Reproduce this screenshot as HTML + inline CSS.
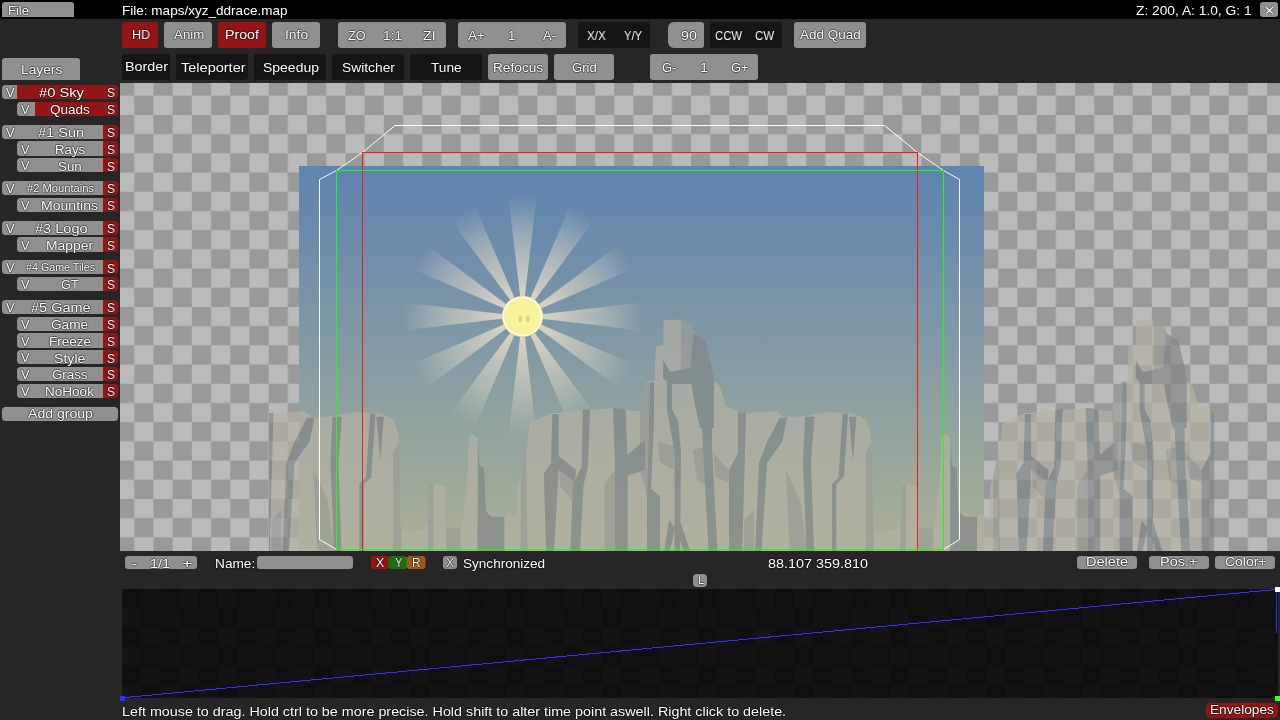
<!DOCTYPE html>
<html><head><meta charset="utf-8"><style>
html,body{margin:0;padding:0;}
body{width:1280px;height:720px;position:relative;overflow:hidden;background:#262626;font-family:"Liberation Sans", sans-serif;}
body>div,body>svg,body>span{position:absolute;}
.t{white-space:pre;transform-origin:0 0;will-change:transform;text-shadow:0.7px 0 0.8px rgba(0,0,0,.45),-0.7px 0 0.8px rgba(0,0,0,.45),0 0.7px 0.8px rgba(0,0,0,.45),0 -0.7px 0.8px rgba(0,0,0,.45);}
svg{display:block;}
</style></head><body>
<div style="left:0px;top:0px;width:1280px;height:18.6px;background:#000;border-radius:0;"></div>
<div style="left:2px;top:2px;width:72px;height:14.8px;background:#909090;border-radius:3px 3px 0 0;"></div>
<span class="t" style="left:8.18px;top:4.81px;font-size:12.22px;line-height:12.22px;color:#fff;transform:scaleX(1.0643);">File</span>
<span class="t" style="left:122.34px;top:5.21px;font-size:12.22px;line-height:12.22px;color:#fff;transform:scaleX(1.1079);">File: maps/xyz_ddrace.map</span>
<span class="t" style="left:1136.17px;top:5.21px;font-size:12.22px;line-height:12.22px;color:#fff;transform:scaleX(1.1265);">Z: 200, A: 1.0, G: 1</span>
<div style="left:1260px;top:2px;width:18px;height:15px;background:#909090;border-radius:3px;"></div>
<svg style="left:1260px;top:2px" width="18" height="15"><path d="M6.2 5.3 L12.8 11.6 M12.8 5.3 L6.2 11.6" stroke="rgba(0,0,0,.35)" stroke-width="2.8"/><path d="M6.2 5.3 L12.8 11.6 M12.8 5.3 L6.2 11.6" stroke="#fff" stroke-width="1.2"/></svg>
<div style="left:122px;top:22px;width:36px;height:25.8px;background:#931515;border-radius:3px;"></div>
<span class="t" style="left:131.53px;top:29.34px;font-size:12.73px;line-height:12.73px;color:#fff;transform:scaleX(0.9796);">HD</span>
<div style="left:164px;top:22px;width:48px;height:25.8px;background:#909090;border-radius:3px;"></div>
<span class="t" style="left:173.70px;top:29.34px;font-size:12.73px;line-height:12.73px;color:#fff;transform:scaleX(1.0481);">Anim</span>
<div style="left:218px;top:22px;width:48px;height:25.8px;background:#931515;border-radius:3px;"></div>
<span class="t" style="left:225.29px;top:29.24px;font-size:12.73px;line-height:12.73px;color:#fff;transform:scaleX(1.1131);">Proof</span>
<div style="left:272px;top:22px;width:48px;height:25.8px;background:#909090;border-radius:3px;"></div>
<span class="t" style="left:284.62px;top:29.14px;font-size:12.73px;line-height:12.73px;color:#fff;transform:scaleX(1.0904);">Info</span>
<div style="left:338px;top:22px;width:108px;height:25.8px;background:#909090;border-radius:3px;"></div>
<span class="t" style="left:348.11px;top:30.34px;font-size:12.73px;line-height:12.73px;color:#fff;transform:scaleX(0.9927);">ZO</span>
<span class="t" style="left:382.84px;top:30.34px;font-size:12.73px;line-height:12.73px;color:#fff;transform:scaleX(1.0805);">1:1</span>
<span class="t" style="left:423.06px;top:30.34px;font-size:12.73px;line-height:12.73px;color:#fff;transform:scaleX(1.1165);">ZI</span>
<div style="left:458px;top:22px;width:108px;height:25.8px;background:#909090;border-radius:3px;"></div>
<span class="t" style="left:468.00px;top:30.34px;font-size:12.73px;line-height:12.73px;color:#fff;transform:scaleX(1.0680);">A+</span>
<span class="t" style="left:508.47px;top:30.34px;font-size:12.73px;line-height:12.73px;color:#fff;transform:scaleX(1.0404);">1</span>
<span class="t" style="left:543.00px;top:30.34px;font-size:12.73px;line-height:12.73px;color:#fff;transform:scaleX(1.0190);">A-</span>
<div style="left:578px;top:22px;width:72px;height:25.8px;background:#151515;border-radius:3px;"></div>
<span class="t" style="left:587.42px;top:30.34px;font-size:12.73px;line-height:12.73px;color:#fff;transform:scaleX(0.9168);">X/X</span>
<span class="t" style="left:623.72px;top:30.34px;font-size:12.73px;line-height:12.73px;color:#fff;transform:scaleX(0.8822);">Y/Y</span>
<div style="left:668px;top:22px;width:36px;height:25.8px;background:#909090;border-radius:6px 3px 3px 6px;"></div>
<span class="t" style="left:680.73px;top:29.54px;font-size:12.73px;line-height:12.73px;color:#fff;transform:scaleX(1.1251);">90</span>
<div style="left:710px;top:22px;width:72px;height:25.8px;background:#151515;border-radius:3px;"></div>
<span class="t" style="left:714.97px;top:30.04px;font-size:12.73px;line-height:12.73px;color:#fff;transform:scaleX(0.8925);">CCW</span>
<span class="t" style="left:755.06px;top:30.04px;font-size:12.73px;line-height:12.73px;color:#fff;transform:scaleX(0.9023);">CW</span>
<div style="left:794px;top:22px;width:72px;height:25.8px;background:#909090;border-radius:3px;"></div>
<span class="t" style="left:800.40px;top:29.14px;font-size:12.73px;line-height:12.73px;color:#fff;transform:scaleX(1.0583);">Add Quad</span>
<div style="left:122px;top:54px;width:48px;height:25.8px;background:#151515;border-radius:3px;"></div>
<span class="t" style="left:125.18px;top:61.34px;font-size:12.73px;line-height:12.73px;color:#fff;transform:scaleX(1.1254);">Border</span>
<div style="left:176px;top:54px;width:72px;height:25.8px;background:#151515;border-radius:3px;"></div>
<span class="t" style="left:180.77px;top:62.14px;font-size:12.73px;line-height:12.73px;color:#fff;transform:scaleX(1.1414);">Teleporter</span>
<div style="left:254px;top:54px;width:72px;height:25.8px;background:#151515;border-radius:3px;"></div>
<span class="t" style="left:263.06px;top:61.94px;font-size:12.73px;line-height:12.73px;color:#fff;transform:scaleX(1.0990);">Speedup</span>
<div style="left:332px;top:54px;width:72px;height:25.8px;background:#151515;border-radius:3px;"></div>
<span class="t" style="left:342.07px;top:61.94px;font-size:12.73px;line-height:12.73px;color:#fff;transform:scaleX(1.0860);">Switcher</span>
<div style="left:410px;top:54px;width:72px;height:25.8px;background:#151515;border-radius:3px;"></div>
<span class="t" style="left:431.39px;top:61.94px;font-size:12.73px;line-height:12.73px;color:#fff;transform:scaleX(1.0783);">Tune</span>
<div style="left:488px;top:54px;width:60px;height:25.8px;background:#909090;border-radius:3px;"></div>
<span class="t" style="left:493.43px;top:61.64px;font-size:12.73px;line-height:12.73px;color:#fff;transform:scaleX(1.0751);">Refocus</span>
<div style="left:554px;top:54px;width:60px;height:25.8px;background:#909090;border-radius:3px;"></div>
<span class="t" style="left:572.49px;top:61.64px;font-size:12.73px;line-height:12.73px;color:#fff;transform:scaleX(1.0294);">Grid</span>
<div style="left:650px;top:54px;width:108px;height:25.8px;background:#909090;border-radius:3px;"></div>
<span class="t" style="left:661.79px;top:61.84px;font-size:12.73px;line-height:12.73px;color:#fff;transform:scaleX(1.0167);">G-</span>
<span class="t" style="left:700.07px;top:61.84px;font-size:12.73px;line-height:12.73px;color:#fff;transform:scaleX(1.1236);">1</span>
<span class="t" style="left:731.09px;top:61.84px;font-size:12.73px;line-height:12.73px;color:#fff;transform:scaleX(1.0207);">G+</span>
<div style="left:2px;top:58px;width:78px;height:22px;background:#909090;border-radius:3px 3px 0 0;"></div>
<span class="t" style="left:20.50px;top:63.64px;font-size:12.73px;line-height:12.73px;color:#fff;transform:scaleX(1.0828);">Layers</span>
<div style="left:17px;top:84.9px;width:101px;height:14.4px;background:#931515;border-radius:0 3.5px 3.5px 0;"></div>
<div style="left:2px;top:84.9px;width:15px;height:14.4px;background:#909090;border-radius:3.5px 0 0 3.5px;"></div>
<span class="t" style="left:5.69px;top:87.24px;font-size:12.73px;line-height:12.73px;color:#fff;transform:scaleX(1.0073);">V</span>
<span class="t" style="left:106.90px;top:87.34px;font-size:12.73px;line-height:12.73px;color:#fff;transform:scaleX(0.9347);">S</span>
<span class="t" style="left:38.51px;top:87.34px;font-size:12.73px;line-height:12.73px;color:#fff;transform:scaleX(1.1558);">#0 Sky</span>
<div style="left:35px;top:101.7px;width:83px;height:14.4px;background:#931515;border-radius:0 3.5px 3.5px 0;"></div>
<div style="left:17px;top:101.7px;width:18px;height:14.4px;background:#909090;border-radius:3.5px 0 0 3.5px;"></div>
<span class="t" style="left:21.49px;top:104.04px;font-size:12.73px;line-height:12.73px;color:#fff;transform:scaleX(1.0073);">V</span>
<span class="t" style="left:106.90px;top:104.14px;font-size:12.73px;line-height:12.73px;color:#fff;transform:scaleX(0.9347);">S</span>
<span class="t" style="left:49.96px;top:104.14px;font-size:12.73px;line-height:12.73px;color:#fff;transform:scaleX(1.0632);">Quads</span>
<div style="left:17px;top:124.5px;width:86px;height:14.4px;background:#909090;border-radius:0;"></div>
<div style="left:103px;top:124.5px;width:15px;height:14.4px;background:#931515;border-radius:0 3.5px 3.5px 0;"></div>
<div style="left:2px;top:124.5px;width:15px;height:14.4px;background:#909090;border-radius:3.5px 0 0 3.5px;"></div>
<span class="t" style="left:5.69px;top:126.84px;font-size:12.73px;line-height:12.73px;color:#fff;transform:scaleX(1.0073);">V</span>
<span class="t" style="left:106.90px;top:126.94px;font-size:12.73px;line-height:12.73px;color:#fff;transform:scaleX(0.9347);">S</span>
<span class="t" style="left:38.32px;top:126.94px;font-size:12.73px;line-height:12.73px;color:#fff;transform:scaleX(1.1448);">#1 Sun</span>
<div style="left:35px;top:141.3px;width:68px;height:14.4px;background:#909090;border-radius:0;"></div>
<div style="left:103px;top:141.3px;width:15px;height:14.4px;background:#931515;border-radius:0 3.5px 3.5px 0;"></div>
<div style="left:17px;top:141.3px;width:18px;height:14.4px;background:#909090;border-radius:3.5px 0 0 3.5px;"></div>
<span class="t" style="left:21.49px;top:143.64px;font-size:12.73px;line-height:12.73px;color:#fff;transform:scaleX(1.0073);">V</span>
<span class="t" style="left:106.90px;top:143.74px;font-size:12.73px;line-height:12.73px;color:#fff;transform:scaleX(0.9347);">S</span>
<span class="t" style="left:54.56px;top:143.74px;font-size:12.73px;line-height:12.73px;color:#fff;transform:scaleX(1.0434);">Rays</span>
<div style="left:35px;top:158.1px;width:68px;height:14.4px;background:#909090;border-radius:0;"></div>
<div style="left:103px;top:158.1px;width:15px;height:14.4px;background:#931515;border-radius:0 3.5px 3.5px 0;"></div>
<div style="left:17px;top:158.1px;width:18px;height:14.4px;background:#909090;border-radius:3.5px 0 0 3.5px;"></div>
<span class="t" style="left:21.49px;top:160.44px;font-size:12.73px;line-height:12.73px;color:#fff;transform:scaleX(1.0073);">V</span>
<span class="t" style="left:106.90px;top:160.54px;font-size:12.73px;line-height:12.73px;color:#fff;transform:scaleX(0.9347);">S</span>
<span class="t" style="left:58.28px;top:160.54px;font-size:12.73px;line-height:12.73px;color:#fff;transform:scaleX(1.0501);">Sun</span>
<div style="left:17px;top:180.9px;width:86px;height:14.4px;background:#909090;border-radius:0;"></div>
<div style="left:103px;top:180.9px;width:15px;height:14.4px;background:#931515;border-radius:0 3.5px 3.5px 0;"></div>
<div style="left:2px;top:180.9px;width:15px;height:14.4px;background:#909090;border-radius:3.5px 0 0 3.5px;"></div>
<span class="t" style="left:5.69px;top:183.24px;font-size:12.73px;line-height:12.73px;color:#fff;transform:scaleX(1.0073);">V</span>
<span class="t" style="left:106.90px;top:183.34px;font-size:12.73px;line-height:12.73px;color:#fff;transform:scaleX(0.9347);">S</span>
<span class="t" style="left:27.40px;top:183.83px;font-size:10.49px;line-height:10.49px;color:#fff;transform:scaleX(1.0633);">#2 Mountains</span>
<div style="left:35px;top:197.7px;width:68px;height:14.4px;background:#909090;border-radius:0;"></div>
<div style="left:103px;top:197.7px;width:15px;height:14.4px;background:#931515;border-radius:0 3.5px 3.5px 0;"></div>
<div style="left:17px;top:197.7px;width:18px;height:14.4px;background:#909090;border-radius:3.5px 0 0 3.5px;"></div>
<span class="t" style="left:21.49px;top:200.04px;font-size:12.73px;line-height:12.73px;color:#fff;transform:scaleX(1.0073);">V</span>
<span class="t" style="left:106.90px;top:200.14px;font-size:12.73px;line-height:12.73px;color:#fff;transform:scaleX(0.9347);">S</span>
<span class="t" style="left:41.13px;top:200.14px;font-size:12.73px;line-height:12.73px;color:#fff;transform:scaleX(1.1054);">Mountins</span>
<div style="left:17px;top:220.5px;width:86px;height:14.4px;background:#909090;border-radius:0;"></div>
<div style="left:103px;top:220.5px;width:15px;height:14.4px;background:#931515;border-radius:0 3.5px 3.5px 0;"></div>
<div style="left:2px;top:220.5px;width:15px;height:14.4px;background:#909090;border-radius:3.5px 0 0 3.5px;"></div>
<span class="t" style="left:5.69px;top:222.84px;font-size:12.73px;line-height:12.73px;color:#fff;transform:scaleX(1.0073);">V</span>
<span class="t" style="left:106.90px;top:222.94px;font-size:12.73px;line-height:12.73px;color:#fff;transform:scaleX(0.9347);">S</span>
<span class="t" style="left:35.00px;top:222.94px;font-size:12.73px;line-height:12.73px;color:#fff;transform:scaleX(1.1432);">#3 Logo</span>
<div style="left:35px;top:237.3px;width:68px;height:14.4px;background:#909090;border-radius:0;"></div>
<div style="left:103px;top:237.3px;width:15px;height:14.4px;background:#931515;border-radius:0 3.5px 3.5px 0;"></div>
<div style="left:17px;top:237.3px;width:18px;height:14.4px;background:#909090;border-radius:3.5px 0 0 3.5px;"></div>
<span class="t" style="left:21.49px;top:239.64px;font-size:12.73px;line-height:12.73px;color:#fff;transform:scaleX(1.0073);">V</span>
<span class="t" style="left:106.90px;top:239.74px;font-size:12.73px;line-height:12.73px;color:#fff;transform:scaleX(0.9347);">S</span>
<span class="t" style="left:45.92px;top:239.74px;font-size:12.73px;line-height:12.73px;color:#fff;transform:scaleX(1.0925);">Mapper</span>
<div style="left:17px;top:260.1px;width:86px;height:14.4px;background:#909090;border-radius:0;"></div>
<div style="left:103px;top:260.1px;width:15px;height:14.4px;background:#931515;border-radius:0 3.5px 3.5px 0;"></div>
<div style="left:2px;top:260.1px;width:15px;height:14.4px;background:#909090;border-radius:3.5px 0 0 3.5px;"></div>
<span class="t" style="left:5.69px;top:262.44px;font-size:12.73px;line-height:12.73px;color:#fff;transform:scaleX(1.0073);">V</span>
<span class="t" style="left:106.90px;top:262.54px;font-size:12.73px;line-height:12.73px;color:#fff;transform:scaleX(0.9347);">S</span>
<span class="t" style="left:26.00px;top:263.43px;font-size:10.49px;line-height:10.49px;color:#fff;transform:scaleX(1.0211);">#4 Game Tiles</span>
<div style="left:35px;top:276.9px;width:68px;height:14.4px;background:#909090;border-radius:0;"></div>
<div style="left:103px;top:276.9px;width:15px;height:14.4px;background:#931515;border-radius:0 3.5px 3.5px 0;"></div>
<div style="left:17px;top:276.9px;width:18px;height:14.4px;background:#909090;border-radius:3.5px 0 0 3.5px;"></div>
<span class="t" style="left:21.49px;top:279.24px;font-size:12.73px;line-height:12.73px;color:#fff;transform:scaleX(1.0073);">V</span>
<span class="t" style="left:106.90px;top:279.34px;font-size:12.73px;line-height:12.73px;color:#fff;transform:scaleX(0.9347);">S</span>
<span class="t" style="left:61.15px;top:279.34px;font-size:12.73px;line-height:12.73px;color:#fff;transform:scaleX(0.9801);">GT</span>
<div style="left:17px;top:299.7px;width:86px;height:14.4px;background:#909090;border-radius:0;"></div>
<div style="left:103px;top:299.7px;width:15px;height:14.4px;background:#931515;border-radius:0 3.5px 3.5px 0;"></div>
<div style="left:2px;top:299.7px;width:15px;height:14.4px;background:#909090;border-radius:3.5px 0 0 3.5px;"></div>
<span class="t" style="left:5.69px;top:302.04px;font-size:12.73px;line-height:12.73px;color:#fff;transform:scaleX(1.0073);">V</span>
<span class="t" style="left:106.90px;top:302.14px;font-size:12.73px;line-height:12.73px;color:#fff;transform:scaleX(0.9347);">S</span>
<span class="t" style="left:31.49px;top:302.14px;font-size:12.73px;line-height:12.73px;color:#fff;transform:scaleX(1.1387);">#5 Game</span>
<div style="left:35px;top:316.5px;width:68px;height:14.4px;background:#909090;border-radius:0;"></div>
<div style="left:103px;top:316.5px;width:15px;height:14.4px;background:#931515;border-radius:0 3.5px 3.5px 0;"></div>
<div style="left:17px;top:316.5px;width:18px;height:14.4px;background:#909090;border-radius:3.5px 0 0 3.5px;"></div>
<span class="t" style="left:21.49px;top:318.84px;font-size:12.73px;line-height:12.73px;color:#fff;transform:scaleX(1.0073);">V</span>
<span class="t" style="left:106.90px;top:318.94px;font-size:12.73px;line-height:12.73px;color:#fff;transform:scaleX(0.9347);">S</span>
<span class="t" style="left:51.35px;top:318.94px;font-size:12.73px;line-height:12.73px;color:#fff;transform:scaleX(1.0737);">Game</span>
<div style="left:35px;top:333.3px;width:68px;height:14.4px;background:#909090;border-radius:0;"></div>
<div style="left:103px;top:333.3px;width:15px;height:14.4px;background:#931515;border-radius:0 3.5px 3.5px 0;"></div>
<div style="left:17px;top:333.3px;width:18px;height:14.4px;background:#909090;border-radius:3.5px 0 0 3.5px;"></div>
<span class="t" style="left:21.49px;top:335.64px;font-size:12.73px;line-height:12.73px;color:#fff;transform:scaleX(1.0073);">V</span>
<span class="t" style="left:106.90px;top:335.74px;font-size:12.73px;line-height:12.73px;color:#fff;transform:scaleX(0.9347);">S</span>
<span class="t" style="left:48.77px;top:335.74px;font-size:12.73px;line-height:12.73px;color:#fff;transform:scaleX(1.0594);">Freeze</span>
<div style="left:35px;top:350.1px;width:68px;height:14.4px;background:#909090;border-radius:0;"></div>
<div style="left:103px;top:350.1px;width:15px;height:14.4px;background:#931515;border-radius:0 3.5px 3.5px 0;"></div>
<div style="left:17px;top:350.1px;width:18px;height:14.4px;background:#909090;border-radius:3.5px 0 0 3.5px;"></div>
<span class="t" style="left:21.49px;top:352.44px;font-size:12.73px;line-height:12.73px;color:#fff;transform:scaleX(1.0073);">V</span>
<span class="t" style="left:106.90px;top:352.54px;font-size:12.73px;line-height:12.73px;color:#fff;transform:scaleX(0.9347);">S</span>
<span class="t" style="left:54.37px;top:352.54px;font-size:12.73px;line-height:12.73px;color:#fff;transform:scaleX(1.1097);">Style</span>
<div style="left:35px;top:366.9px;width:68px;height:14.4px;background:#909090;border-radius:0;"></div>
<div style="left:103px;top:366.9px;width:15px;height:14.4px;background:#931515;border-radius:0 3.5px 3.5px 0;"></div>
<div style="left:17px;top:366.9px;width:18px;height:14.4px;background:#909090;border-radius:3.5px 0 0 3.5px;"></div>
<span class="t" style="left:21.49px;top:369.24px;font-size:12.73px;line-height:12.73px;color:#fff;transform:scaleX(1.0073);">V</span>
<span class="t" style="left:106.90px;top:369.34px;font-size:12.73px;line-height:12.73px;color:#fff;transform:scaleX(0.9347);">S</span>
<span class="t" style="left:52.14px;top:369.34px;font-size:12.73px;line-height:12.73px;color:#fff;transform:scaleX(1.0462);">Grass</span>
<div style="left:35px;top:383.7px;width:68px;height:14.4px;background:#909090;border-radius:0;"></div>
<div style="left:103px;top:383.7px;width:15px;height:14.4px;background:#931515;border-radius:0 3.5px 3.5px 0;"></div>
<div style="left:17px;top:383.7px;width:18px;height:14.4px;background:#909090;border-radius:3.5px 0 0 3.5px;"></div>
<span class="t" style="left:21.49px;top:386.04px;font-size:12.73px;line-height:12.73px;color:#fff;transform:scaleX(1.0073);">V</span>
<span class="t" style="left:106.90px;top:386.14px;font-size:12.73px;line-height:12.73px;color:#fff;transform:scaleX(0.9347);">S</span>
<span class="t" style="left:44.90px;top:386.14px;font-size:12.73px;line-height:12.73px;color:#fff;transform:scaleX(1.0642);">NoHook</span>
<div style="left:2px;top:406.5px;width:116px;height:14.6px;background:#909090;border-radius:3.5px;"></div>
<span class="t" style="left:28.00px;top:408.34px;font-size:12.73px;line-height:12.73px;color:#fff;transform:scaleX(1.1063);">Add group</span>
<div style="left:120px;top:83px;width:1160px;height:468px;overflow:hidden;"><svg width="1160" height="468" style="position:absolute;left:0;top:0;display:block"><defs><pattern id="chk" patternUnits="userSpaceOnUse" x="-4.95" y="-6.45" width="38.4" height="38.4"><rect width="38.4" height="38.4" fill="#bababa"/><rect width="19.2" height="19.2" fill="#999"/><rect x="19.2" y="19.2" width="19.2" height="19.2" fill="#999"/></pattern><linearGradient id="sky" gradientUnits="userSpaceOnUse" x1="0" y1="166" x2="0" y2="551"><stop offset="0" stop-color="#5e84b0"/><stop offset="0.218" stop-color="#6e8dab"/><stop offset="0.426" stop-color="#7f98a6"/><stop offset="0.608" stop-color="#8da0a0"/><stop offset="0.79" stop-color="#9aa89a"/><stop offset="1" stop-color="#a9b096"/></linearGradient><radialGradient id="ray" gradientUnits="userSpaceOnUse" cx="522.5" cy="316.4" r="120"><stop offset="0" stop-color="#f2e6cf" stop-opacity="0.95"/><stop offset="0.3" stop-color="#efe3cc" stop-opacity="0.68"/><stop offset="0.65" stop-color="#e8dfcc" stop-opacity="0.4"/><stop offset="1" stop-color="#ece2cf" stop-opacity="0"/></radialGradient></defs><rect width="1160" height="468" fill="url(#chk)"/><g transform="translate(-120,-83)"><rect x="299" y="166" width="685" height="400" fill="url(#sky)"/><path d="M522.5,316.4L508.5,197.2L536.5,197.2ZM522.5,316.4L570.0,206.2L594.2,220.2ZM522.5,316.4L618.7,244.7L632.7,268.9ZM522.5,316.4L641.7,302.4L641.7,330.4ZM522.5,316.4L632.7,363.9L618.7,388.1ZM522.5,316.4L594.2,412.6L570.0,426.6ZM522.5,316.4L536.5,435.6L508.5,435.6ZM522.5,316.4L475.0,426.6L450.8,412.6ZM522.5,316.4L426.3,388.1L412.3,363.9ZM522.5,316.4L403.3,330.4L403.3,302.4ZM522.5,316.4L412.3,268.9L426.3,244.7ZM522.5,316.4L450.8,220.2L475.0,206.2Z" fill="url(#ray)"/><circle cx="522.5" cy="316.4" r="20.8" fill="#c9bb9c"/><circle cx="522.5" cy="316.4" r="20.2" fill="#fffbe2"/><circle cx="522.5" cy="316.4" r="18.4" fill="#f7f29c"/><ellipse cx="520.3" cy="318.9" rx="1.8" ry="3.4" fill="#d4d67e"/><ellipse cx="528" cy="318.9" rx="1.8" ry="3.4" fill="#d4d67e"/><clipPath id="mclip"><rect x="269" y="300" width="945.2" height="300"/></clipPath><clipPath id="silclip"><path d="M527.4,560 L527.4,441 L529.8,423.6 L535,420 L552,413 L584,410 L616,408 L640,411.5 L645,386 L648,381 L654.6,380 L655.6,346 L663.3,345 L663.3,319.8 L678.9,319.4 L691.6,323.7 L694.5,333.4 L706,341.2 L712,366.5 L714,380 L719.8,386 L723.7,397.6 L725.6,405.4 L737.3,411.2 L741.6,413 L776.6,411 L784,417 L804.6,416 L825.6,412 L853.6,413 L866.6,420 L871.2,434.6 L872.2,452.8 L873.1,529.3 L885.8,532 L894.9,529.3 L900.4,522 L901.3,485.6 L905.9,483.8 L918.6,486.5 L917.6,523.8 L920.4,527.5 L933.2,528.4 L935.9,514.7 L939.6,478.3 L941.4,436.4 L945.9,434.6 L950.5,438.2 L952.3,465.5 L956.9,468.3 L958.6,511 L964.1,516.5 L975.1,516.5 L981.4,514.7 L988.7,516.5 L989.6,489 L993.3,474.6 L998.6,451 L1000.5,441 L1000.5,560 Z"/></clipPath><g clip-path="url(#mclip)" opacity="0.68"><g transform="translate(-472.6,0)"><g clip-path="url(#silclip)"><path d="M527.4,560 L527.4,441 L529.8,423.6 L535,420 L552,413 L584,410 L616,408 L640,411.5 L645,386 L648,381 L654.6,380 L655.6,346 L663.3,345 L663.3,319.8 L678.9,319.4 L691.6,323.7 L694.5,333.4 L706,341.2 L712,366.5 L714,380 L719.8,386 L723.7,397.6 L725.6,405.4 L737.3,411.2 L741.6,413 L776.6,411 L784,417 L804.6,416 L825.6,412 L853.6,413 L866.6,420 L871.2,434.6 L872.2,452.8 L873.1,529.3 L885.8,532 L894.9,529.3 L900.4,522 L901.3,485.6 L905.9,483.8 L918.6,486.5 L917.6,523.8 L920.4,527.5 L933.2,528.4 L935.9,514.7 L939.6,478.3 L941.4,436.4 L945.9,434.6 L950.5,438.2 L952.3,465.5 L956.9,468.3 L958.6,511 L964.1,516.5 L975.1,516.5 L981.4,514.7 L988.7,516.5 L989.6,489 L993.3,474.6 L998.6,451 L1000.5,441 L1000.5,560 Z" fill="#b5b1a4"/><polygon points="604.7,484 615,470 615,560 604.7,560" fill="#9c9d96"/><polygon points="680.9,320.8 691.6,323.7 694.5,333.4 693.5,376 680.9,376" fill="#9c9d96"/><polygon points="786,470 800,500 809,560 790,560" fill="#9c9d96"/><polygon points="865.8,452 874,440 874,560 865.8,560" fill="#9c9d96"/><polygon points="900.4,485.6 906,484 906,560 900.4,560" fill="#9c9d96"/><polygon points="918.6,527.5 933.2,528.4 933.2,560 918.6,560" fill="#9c9d96"/><polygon points="993.3,474.6 998.6,451 1000.5,560 993,560" fill="#9c9d96"/><polygon points="640,411.5 645,386 650,382 647,496 640,470" fill="#9c9d96"/><polygon points="559,466 574,482 572,500 560,486" fill="#9c9d96"/><polygon points="658,442 674,446 674,470 660,462" fill="#9c9d96"/><polygon points="693,450 703,447 709,487 697,480" fill="#9c9d96"/><polygon points="713,453 729,470 729,482 716,478" fill="#9c9d96"/><polygon points="744,520 754,510 754,560 744,560" fill="#9c9d96"/><polygon points="552.3,414 558.5,414 558.5,473 554,551 546,551 543.9,473.4 551,463" fill="#7f8686"/><polygon points="558.5,456 576,470 575,482 557,468" fill="#7f8686"/><polygon points="582.7,409 590,409 587.9,467 583.7,484 579.5,560 570,560 573,484 581.6,467" fill="#7f8686"/><polygon points="613,408 625.6,408 627.7,463 627.7,560 615,560 615,463" fill="#7f8686"/><polygon points="693.5,333 706,341 712,366.5 714,380 714,428 700,428 694,400 690,376" fill="#7f8686"/><polygon points="663.3,360 670,372 690,368 694,376 693,384 670,384 663,378" fill="#7f8686"/><polygon points="667,380 672,380 672,409 678,421 681,452 680,560 674.5,560 674.5,452 669,421 667,409" fill="#7f8686"/><polygon points="650,382 654,382 654,421 651,489 660,496 660,560 647,560 647,496 649,421" fill="#7f8686"/><polygon points="702,428 712,428 712,447 718,560 709,560 703,447" fill="#7f8686"/><polygon points="738,412 746,412 745,453 742,560 729,560 729,470 738,453" fill="#7f8686"/><polygon points="779.8,417.8 787.2,417.8 782,442 767,463 761,560 754.7,560 759,463 767,442" fill="#7f8686"/><polygon points="805,416.8 814.4,416.8 811,463 814.4,560 807,560 803,463" fill="#7f8686"/><polygon points="842.7,413.6 848,413.6 843.8,477.6 836.4,484 836.4,560 832,560 832,484 838.5,477.6" fill="#7f8686"/><polygon points="849,416.8 856.4,416.8 853,460.8" fill="#7f8686"/><polygon points="950.5,438.2 952.3,465.5 956.9,468.3 958.6,511 964.1,516.5 977,516.5 977,560 950,560" fill="#7f8686"/><polygon points="627,455 645,440 645,470 627,476" fill="#7f8686"/><polygon points="669,520 675,528 668,560 663,560" fill="#7f8686"/><polygon points="679,518 693,560 686,560 677,530" fill="#7f8686"/></g></g><g transform="translate(0,0)"><g clip-path="url(#silclip)"><path d="M527.4,560 L527.4,441 L529.8,423.6 L535,420 L552,413 L584,410 L616,408 L640,411.5 L645,386 L648,381 L654.6,380 L655.6,346 L663.3,345 L663.3,319.8 L678.9,319.4 L691.6,323.7 L694.5,333.4 L706,341.2 L712,366.5 L714,380 L719.8,386 L723.7,397.6 L725.6,405.4 L737.3,411.2 L741.6,413 L776.6,411 L784,417 L804.6,416 L825.6,412 L853.6,413 L866.6,420 L871.2,434.6 L872.2,452.8 L873.1,529.3 L885.8,532 L894.9,529.3 L900.4,522 L901.3,485.6 L905.9,483.8 L918.6,486.5 L917.6,523.8 L920.4,527.5 L933.2,528.4 L935.9,514.7 L939.6,478.3 L941.4,436.4 L945.9,434.6 L950.5,438.2 L952.3,465.5 L956.9,468.3 L958.6,511 L964.1,516.5 L975.1,516.5 L981.4,514.7 L988.7,516.5 L989.6,489 L993.3,474.6 L998.6,451 L1000.5,441 L1000.5,560 Z" fill="#b5b1a4"/><polygon points="604.7,484 615,470 615,560 604.7,560" fill="#9c9d96"/><polygon points="680.9,320.8 691.6,323.7 694.5,333.4 693.5,376 680.9,376" fill="#9c9d96"/><polygon points="786,470 800,500 809,560 790,560" fill="#9c9d96"/><polygon points="865.8,452 874,440 874,560 865.8,560" fill="#9c9d96"/><polygon points="900.4,485.6 906,484 906,560 900.4,560" fill="#9c9d96"/><polygon points="918.6,527.5 933.2,528.4 933.2,560 918.6,560" fill="#9c9d96"/><polygon points="993.3,474.6 998.6,451 1000.5,560 993,560" fill="#9c9d96"/><polygon points="640,411.5 645,386 650,382 647,496 640,470" fill="#9c9d96"/><polygon points="559,466 574,482 572,500 560,486" fill="#9c9d96"/><polygon points="658,442 674,446 674,470 660,462" fill="#9c9d96"/><polygon points="693,450 703,447 709,487 697,480" fill="#9c9d96"/><polygon points="713,453 729,470 729,482 716,478" fill="#9c9d96"/><polygon points="744,520 754,510 754,560 744,560" fill="#9c9d96"/><polygon points="552.3,414 558.5,414 558.5,473 554,551 546,551 543.9,473.4 551,463" fill="#7f8686"/><polygon points="558.5,456 576,470 575,482 557,468" fill="#7f8686"/><polygon points="582.7,409 590,409 587.9,467 583.7,484 579.5,560 570,560 573,484 581.6,467" fill="#7f8686"/><polygon points="613,408 625.6,408 627.7,463 627.7,560 615,560 615,463" fill="#7f8686"/><polygon points="693.5,333 706,341 712,366.5 714,380 714,428 700,428 694,400 690,376" fill="#7f8686"/><polygon points="663.3,360 670,372 690,368 694,376 693,384 670,384 663,378" fill="#7f8686"/><polygon points="667,380 672,380 672,409 678,421 681,452 680,560 674.5,560 674.5,452 669,421 667,409" fill="#7f8686"/><polygon points="650,382 654,382 654,421 651,489 660,496 660,560 647,560 647,496 649,421" fill="#7f8686"/><polygon points="702,428 712,428 712,447 718,560 709,560 703,447" fill="#7f8686"/><polygon points="738,412 746,412 745,453 742,560 729,560 729,470 738,453" fill="#7f8686"/><polygon points="779.8,417.8 787.2,417.8 782,442 767,463 761,560 754.7,560 759,463 767,442" fill="#7f8686"/><polygon points="805,416.8 814.4,416.8 811,463 814.4,560 807,560 803,463" fill="#7f8686"/><polygon points="842.7,413.6 848,413.6 843.8,477.6 836.4,484 836.4,560 832,560 832,484 838.5,477.6" fill="#7f8686"/><polygon points="849,416.8 856.4,416.8 853,460.8" fill="#7f8686"/><polygon points="950.5,438.2 952.3,465.5 956.9,468.3 958.6,511 964.1,516.5 977,516.5 977,560 950,560" fill="#7f8686"/><polygon points="627,455 645,440 645,470 627,476" fill="#7f8686"/><polygon points="669,520 675,528 668,560 663,560" fill="#7f8686"/><polygon points="679,518 693,560 686,560 677,530" fill="#7f8686"/></g></g><g transform="translate(472.6,0)"><g clip-path="url(#silclip)"><path d="M527.4,560 L527.4,441 L529.8,423.6 L535,420 L552,413 L584,410 L616,408 L640,411.5 L645,386 L648,381 L654.6,380 L655.6,346 L663.3,345 L663.3,319.8 L678.9,319.4 L691.6,323.7 L694.5,333.4 L706,341.2 L712,366.5 L714,380 L719.8,386 L723.7,397.6 L725.6,405.4 L737.3,411.2 L741.6,413 L776.6,411 L784,417 L804.6,416 L825.6,412 L853.6,413 L866.6,420 L871.2,434.6 L872.2,452.8 L873.1,529.3 L885.8,532 L894.9,529.3 L900.4,522 L901.3,485.6 L905.9,483.8 L918.6,486.5 L917.6,523.8 L920.4,527.5 L933.2,528.4 L935.9,514.7 L939.6,478.3 L941.4,436.4 L945.9,434.6 L950.5,438.2 L952.3,465.5 L956.9,468.3 L958.6,511 L964.1,516.5 L975.1,516.5 L981.4,514.7 L988.7,516.5 L989.6,489 L993.3,474.6 L998.6,451 L1000.5,441 L1000.5,560 Z" fill="#b5b1a4"/><polygon points="604.7,484 615,470 615,560 604.7,560" fill="#9c9d96"/><polygon points="680.9,320.8 691.6,323.7 694.5,333.4 693.5,376 680.9,376" fill="#9c9d96"/><polygon points="786,470 800,500 809,560 790,560" fill="#9c9d96"/><polygon points="865.8,452 874,440 874,560 865.8,560" fill="#9c9d96"/><polygon points="900.4,485.6 906,484 906,560 900.4,560" fill="#9c9d96"/><polygon points="918.6,527.5 933.2,528.4 933.2,560 918.6,560" fill="#9c9d96"/><polygon points="993.3,474.6 998.6,451 1000.5,560 993,560" fill="#9c9d96"/><polygon points="640,411.5 645,386 650,382 647,496 640,470" fill="#9c9d96"/><polygon points="559,466 574,482 572,500 560,486" fill="#9c9d96"/><polygon points="658,442 674,446 674,470 660,462" fill="#9c9d96"/><polygon points="693,450 703,447 709,487 697,480" fill="#9c9d96"/><polygon points="713,453 729,470 729,482 716,478" fill="#9c9d96"/><polygon points="744,520 754,510 754,560 744,560" fill="#9c9d96"/><polygon points="552.3,414 558.5,414 558.5,473 554,551 546,551 543.9,473.4 551,463" fill="#7f8686"/><polygon points="558.5,456 576,470 575,482 557,468" fill="#7f8686"/><polygon points="582.7,409 590,409 587.9,467 583.7,484 579.5,560 570,560 573,484 581.6,467" fill="#7f8686"/><polygon points="613,408 625.6,408 627.7,463 627.7,560 615,560 615,463" fill="#7f8686"/><polygon points="693.5,333 706,341 712,366.5 714,380 714,428 700,428 694,400 690,376" fill="#7f8686"/><polygon points="663.3,360 670,372 690,368 694,376 693,384 670,384 663,378" fill="#7f8686"/><polygon points="667,380 672,380 672,409 678,421 681,452 680,560 674.5,560 674.5,452 669,421 667,409" fill="#7f8686"/><polygon points="650,382 654,382 654,421 651,489 660,496 660,560 647,560 647,496 649,421" fill="#7f8686"/><polygon points="702,428 712,428 712,447 718,560 709,560 703,447" fill="#7f8686"/><polygon points="738,412 746,412 745,453 742,560 729,560 729,470 738,453" fill="#7f8686"/><polygon points="779.8,417.8 787.2,417.8 782,442 767,463 761,560 754.7,560 759,463 767,442" fill="#7f8686"/><polygon points="805,416.8 814.4,416.8 811,463 814.4,560 807,560 803,463" fill="#7f8686"/><polygon points="842.7,413.6 848,413.6 843.8,477.6 836.4,484 836.4,560 832,560 832,484 838.5,477.6" fill="#7f8686"/><polygon points="849,416.8 856.4,416.8 853,460.8" fill="#7f8686"/><polygon points="950.5,438.2 952.3,465.5 956.9,468.3 958.6,511 964.1,516.5 977,516.5 977,560 950,560" fill="#7f8686"/><polygon points="627,455 645,440 645,470 627,476" fill="#7f8686"/><polygon points="669,520 675,528 668,560 663,560" fill="#7f8686"/><polygon points="679,518 693,560 686,560 677,530" fill="#7f8686"/></g></g></g><polyline points="395,125.5 884.5,125.5 917.5,152.5 943.5,170.5 959.5,179.5 959.5,539.5 943.5,549.5 336.5,549.5 319.5,539.5 319.5,179.5 336.5,170.5 362.5,152.5 395,125.5" fill="none" stroke="#fff" stroke-width="1"/><rect x="362.5" y="152.5" width="555" height="420" fill="none" stroke="#ff1414" stroke-width="1"/><rect x="336.5" y="170.5" width="607" height="379" fill="none" stroke="#14ff14" stroke-width="1"/></g></svg></div>
<div style="left:125px;top:556px;width:72px;height:13px;background:#909090;border-radius:3px;"></div>
<span class="t" style="left:132.28px;top:558.24px;font-size:12.73px;line-height:12.73px;color:#fff;transform:scaleX(1.0643);">-</span>
<span class="t" style="left:150.08px;top:558.24px;font-size:12.73px;line-height:12.73px;color:#fff;transform:scaleX(1.1371);">1/1</span>
<span class="t" style="left:182.38px;top:558.24px;font-size:12.73px;line-height:12.73px;color:#fff;transform:scaleX(1.4092);">+</span>
<span class="t" style="left:214.53px;top:558.24px;font-size:12.73px;line-height:12.73px;color:#fff;transform:scaleX(1.0752);">Name:</span>
<div style="left:257px;top:556px;width:96px;height:13px;background:#909090;border-radius:3px;"></div>
<svg style="left:371px;top:555px" width="60" height="15"><path d="M1.5,1 h15 l2,2 v9 l-2,2 h-15 l-2,-2 v-9z" fill="#921515"/><path d="M19.5,1 h15 l2,2 v9 l-2,2 h-15 l-2,-2 v-9z" fill="#187018"/><path d="M37.5,1 h15 l2,2 v9 l-2,2 h-15 l-2,-2 v-9z" fill="#9b5a18"/></svg>
<span class="t" style="left:376.06px;top:556.91px;font-size:12.22px;line-height:12.22px;color:#fff;transform:scaleX(1.0088);">X</span>
<span class="t" style="left:394.51px;top:556.91px;font-size:12.22px;line-height:12.22px;color:#fff;transform:scaleX(0.8995);">Y</span>
<span class="t" style="left:411.78px;top:556.91px;font-size:12.22px;line-height:12.22px;color:#fff;transform:scaleX(0.9450);">R</span>
<div style="left:443px;top:556px;width:14.4px;height:13px;background:#909090;border-radius:3px;"></div>
<span class="t" style="left:445.96px;top:557.31px;font-size:12.22px;line-height:12.22px;color:#eee;transform:scaleX(1.0088);">X</span>
<span class="t" style="left:462.98px;top:558.24px;font-size:12.73px;line-height:12.73px;color:#fff;transform:scaleX(1.0658);">Synchronized</span>
<span class="t" style="left:767.95px;top:558.24px;font-size:12.73px;line-height:12.73px;color:#fff;transform:scaleX(1.1316);">88.107 359.810</span>
<div style="left:693px;top:573.7px;width:14px;height:13.5px;background:#909090;border-radius:4px;"></div>
<span class="t" style="left:698.26px;top:574.41px;font-size:12.22px;line-height:12.22px;color:#fff;transform:scaleX(0.8851);">L</span>
<div style="left:1077px;top:556px;width:60px;height:13px;background:#909090;border-radius:3px;"></div>
<span class="t" style="left:1086.16px;top:556.44px;font-size:12.73px;line-height:12.73px;color:#fff;transform:scaleX(1.1423);">Delete</span>
<div style="left:1149px;top:556px;width:60px;height:13px;background:#909090;border-radius:3px;"></div>
<span class="t" style="left:1159.87px;top:556.44px;font-size:12.73px;line-height:12.73px;color:#fff;transform:scaleX(1.1358);">Pos.+</span>
<div style="left:1215px;top:556px;width:60px;height:13px;background:#909090;border-radius:3px;"></div>
<span class="t" style="left:1224.75px;top:556.44px;font-size:12.73px;line-height:12.73px;color:#fff;transform:scaleX(1.0958);">Color+</span>
<svg style="left:122px;top:589px" width="1156" height="109"><defs><pattern id="echk" patternUnits="userSpaceOnUse" width="38.4" height="38.4"><rect width="38.4" height="38.4" fill="#131313"/><rect width="19.2" height="19.2" fill="#0f0f0f"/><rect x="19.2" y="19.2" width="19.2" height="19.2" fill="#0f0f0f"/></pattern></defs><rect width="1156" height="109" fill="url(#echk)"/></svg>
<svg style="left:0;top:0" width="1280" height="720"><line x1="125" y1="697.5" x2="1276" y2="589.5" stroke="#3232ff" stroke-width="1" shape-rendering="crispEdges"/><line x1="1276.5" y1="592" x2="1276.5" y2="633" stroke="#3232ff" stroke-width="1" shape-rendering="crispEdges"/><rect x="120" y="696" width="5" height="5" fill="#3232ff"/><rect x="1275" y="587" width="5" height="5" fill="#ffffff"/><rect x="1275" y="696" width="5" height="5" fill="#32ff32"/></svg>
<span class="t" style="left:121.98px;top:706.24px;font-size:12.73px;line-height:12.73px;color:#fff;transform:scaleX(1.1264);">Left mouse to drag. Hold ctrl to be more precise. Hold shift to alter time point aswell. Right click to delete.</span>
<div style="left:1206px;top:703px;width:72px;height:15px;background:#931515;border-radius:5px;"></div>
<span class="t" style="left:1209.73px;top:704.34px;font-size:12.73px;line-height:12.73px;color:#fff;transform:scaleX(1.0751);">Envelopes</span>
</body></html>
